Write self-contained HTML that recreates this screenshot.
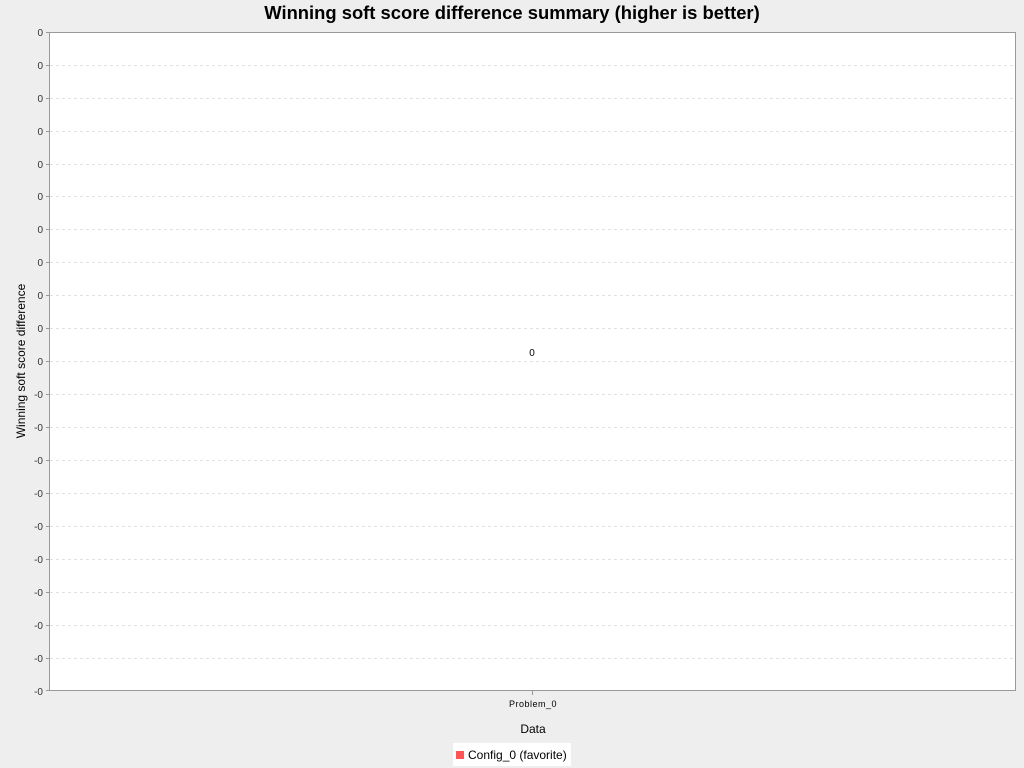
<!DOCTYPE html>
<html><head><style>
html,body{margin:0;padding:0;background:#eeeeee;}
svg{display:block;font-family:"Liberation Sans",sans-serif;}
</style></head><body>
<svg width="1024" height="768" xmlns="http://www.w3.org/2000/svg">
<rect width="1024" height="768" fill="#eeeeee"/>
<text x="512" y="19" text-anchor="middle" font-size="18.4" font-weight="bold" fill="#000">Winning soft score difference summary (higher is better)</text>
<rect x="49.5" y="32.5" width="966" height="658" fill="#fff" stroke="#999"/>
<g stroke="#e2e2e2" stroke-dasharray="3,3" stroke-width="1">
<line x1="50" x2="1015" y1="65.5" y2="65.5"/>
<line x1="50" x2="1015" y1="98.5" y2="98.5"/>
<line x1="50" x2="1015" y1="131.5" y2="131.5"/>
<line x1="50" x2="1015" y1="164.5" y2="164.5"/>
<line x1="50" x2="1015" y1="196.5" y2="196.5"/>
<line x1="50" x2="1015" y1="229.5" y2="229.5"/>
<line x1="50" x2="1015" y1="262.5" y2="262.5"/>
<line x1="50" x2="1015" y1="295.5" y2="295.5"/>
<line x1="50" x2="1015" y1="328.5" y2="328.5"/>
<line x1="50" x2="1015" y1="361.5" y2="361.5"/>
<line x1="50" x2="1015" y1="394.5" y2="394.5"/>
<line x1="50" x2="1015" y1="427.5" y2="427.5"/>
<line x1="50" x2="1015" y1="460.5" y2="460.5"/>
<line x1="50" x2="1015" y1="493.5" y2="493.5"/>
<line x1="50" x2="1015" y1="526.5" y2="526.5"/>
<line x1="50" x2="1015" y1="559.5" y2="559.5"/>
<line x1="50" x2="1015" y1="592.5" y2="592.5"/>
<line x1="50" x2="1015" y1="625.5" y2="625.5"/>
<line x1="50" x2="1015" y1="658.5" y2="658.5"/>
</g>
<g stroke="#999">
<line x1="46" x2="49" y1="32.5" y2="32.5"/><line x1="46" x2="49" y1="65.5" y2="65.5"/><line x1="46" x2="49" y1="98.5" y2="98.5"/><line x1="46" x2="49" y1="131.5" y2="131.5"/><line x1="46" x2="49" y1="164.5" y2="164.5"/><line x1="46" x2="49" y1="196.5" y2="196.5"/><line x1="46" x2="49" y1="229.5" y2="229.5"/><line x1="46" x2="49" y1="262.5" y2="262.5"/><line x1="46" x2="49" y1="295.5" y2="295.5"/><line x1="46" x2="49" y1="328.5" y2="328.5"/><line x1="46" x2="49" y1="361.5" y2="361.5"/><line x1="46" x2="49" y1="394.5" y2="394.5"/><line x1="46" x2="49" y1="427.5" y2="427.5"/><line x1="46" x2="49" y1="460.5" y2="460.5"/><line x1="46" x2="49" y1="493.5" y2="493.5"/><line x1="46" x2="49" y1="526.5" y2="526.5"/><line x1="46" x2="49" y1="559.5" y2="559.5"/><line x1="46" x2="49" y1="592.5" y2="592.5"/><line x1="46" x2="49" y1="625.5" y2="625.5"/><line x1="46" x2="49" y1="658.5" y2="658.5"/><line x1="46" x2="49" y1="690.5" y2="690.5"/>
<line x1="532.5" x2="532.5" y1="691" y2="695"/>
</g>
<g font-size="10" text-anchor="end" fill="#333">
<text x="43" y="36">0</text><text x="43" y="69">0</text><text x="43" y="102">0</text><text x="43" y="135">0</text><text x="43" y="168">0</text><text x="43" y="200">0</text><text x="43" y="233">0</text><text x="43" y="266">0</text><text x="43" y="299">0</text><text x="43" y="332">0</text><text x="43" y="365">0</text><text x="43" y="398">-0</text><text x="43" y="431">-0</text><text x="43" y="464">-0</text><text x="43" y="497">-0</text><text x="43" y="530">-0</text><text x="43" y="563">-0</text><text x="43" y="596">-0</text><text x="43" y="629">-0</text><text x="43" y="662">-0</text><text x="43" y="695">-0</text>
</g>
<text transform="translate(25,361) rotate(-90)" text-anchor="middle" font-size="12" fill="#000">Winning soft score difference</text>
<text x="532" y="356" text-anchor="middle" font-size="10" fill="#000">0</text>
<text x="533" y="707" text-anchor="middle" font-size="9" fill="#000" letter-spacing="0.5">Problem_0</text>
<text x="533" y="733" text-anchor="middle" font-size="12" fill="#000">Data</text>
<rect x="453" y="743" width="118" height="23" fill="#fff"/>
<rect x="456" y="751" width="8" height="8" fill="#ff5555"/>
<text x="468" y="759" font-size="12" fill="#000">Config_0 (favorite)</text>
</svg>
</body></html>
